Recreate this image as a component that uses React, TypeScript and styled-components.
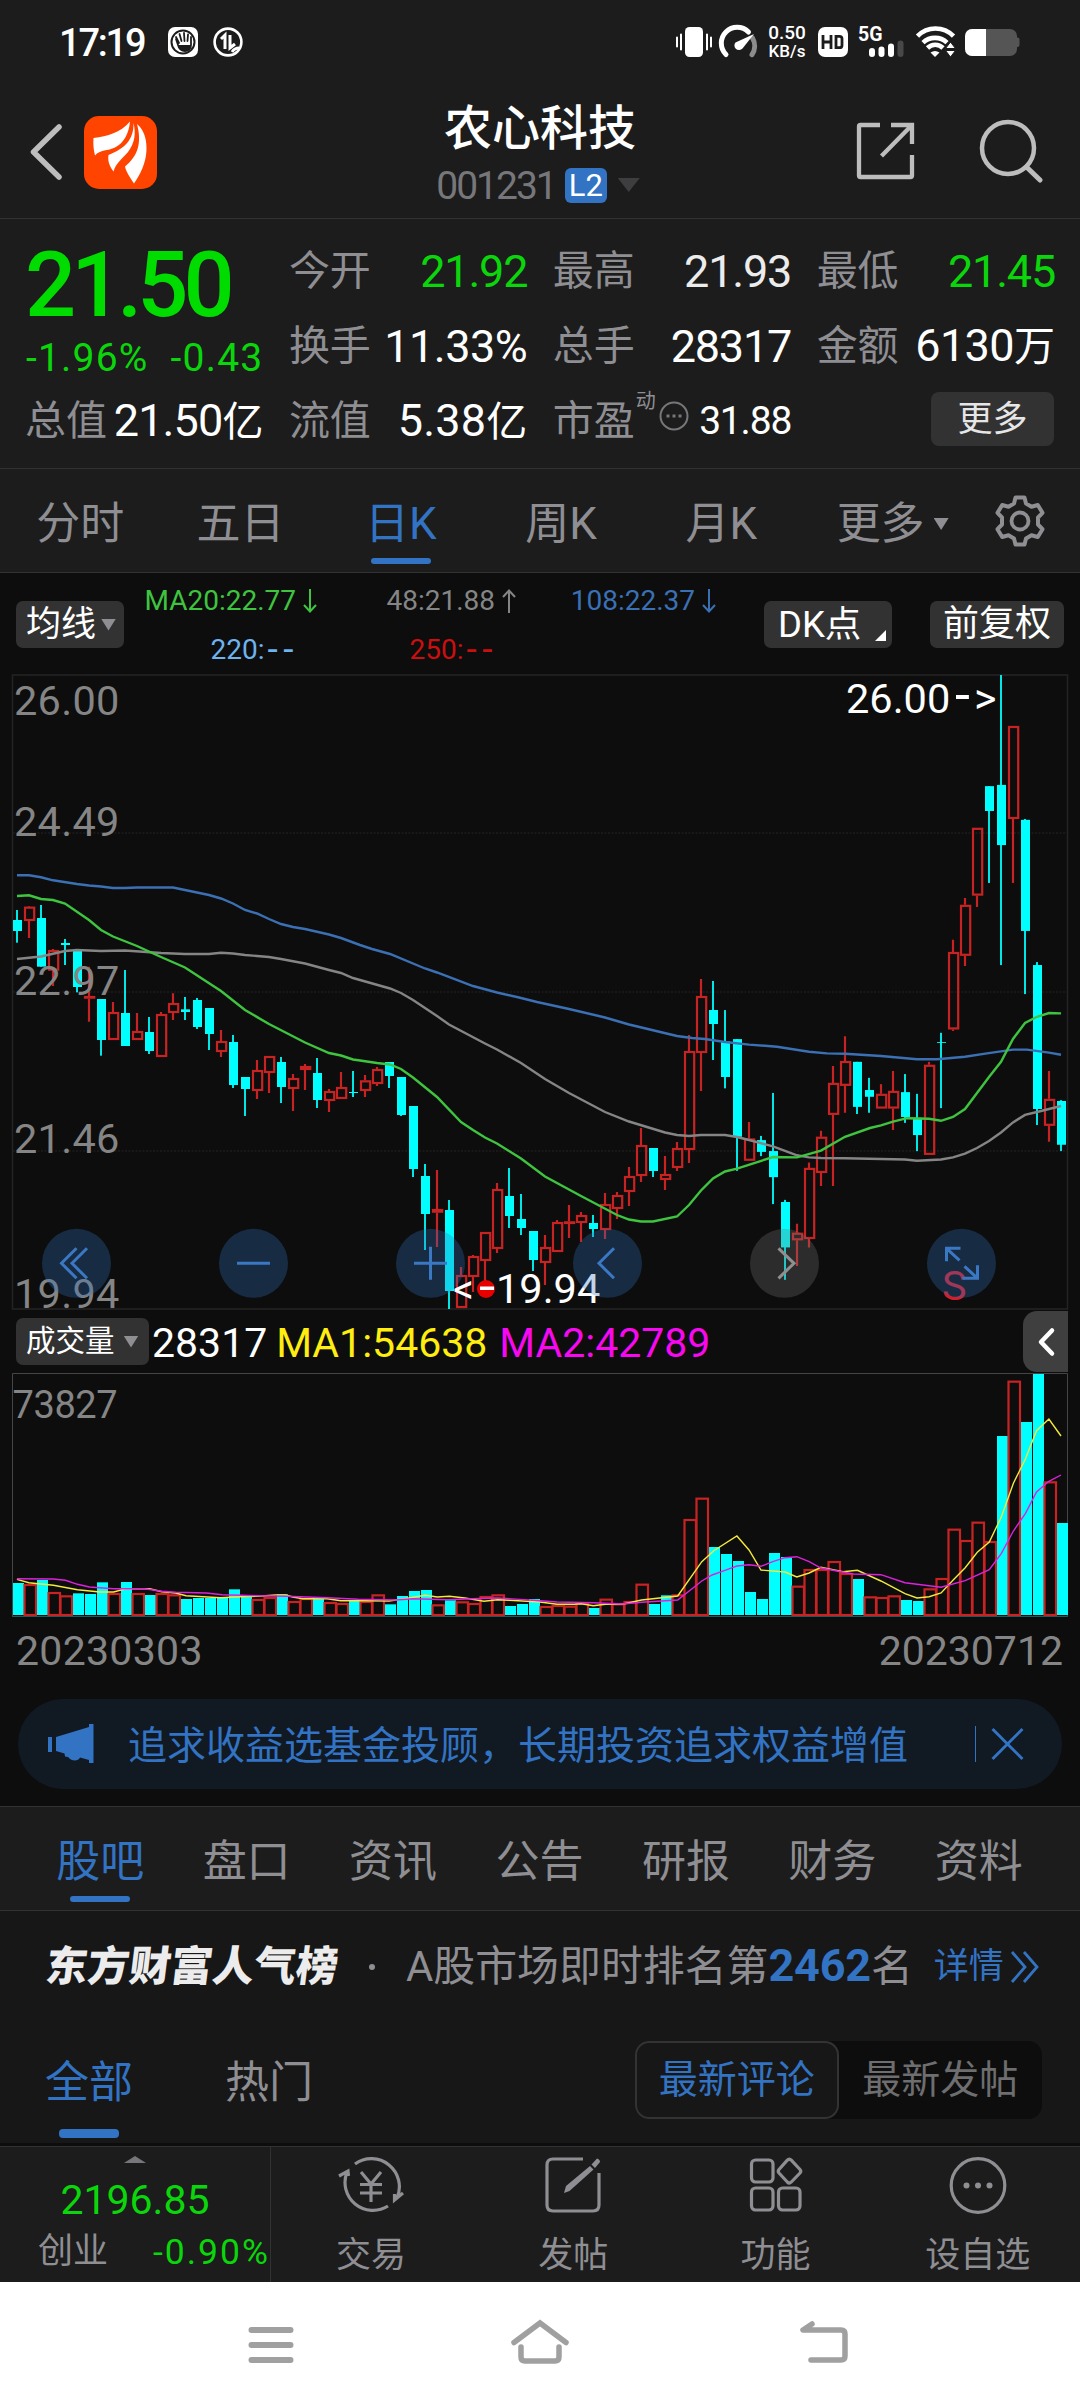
import React from "react";
import styled, { createGlobalStyle } from "styled-components";

const C = {
  panel: "#1c1c1c",
  chart: "#0d0d0d",
  feed: "#171717",
  line: "#323232",
  grey: "#8e8e93",
  white: "#ffffff",
  green: "#0bd60b",
  blue: "#3273c3",
  red: "#c82323",
  cyan: "#00ffff",
  button: "#323232",
};

const FONT = `Roboto, "Noto Sans CJK SC", sans-serif`;

const Global = createGlobalStyle`
  * { box-sizing: border-box; }
  body { margin: 0; background: ${C.panel}; }
`;

const Screen = styled.div`
  width: 1080px;
  height: 2408px;
  display: flex;
  flex-direction: column;
  overflow: hidden;
  background: ${C.panel};
  font-family: ${FONT};
  color: ${C.white};
  white-space: nowrap;
`;

const Text = styled.span<{ $size: number; $color?: string; $ls?: number; $w?: number; $lh?: number; $dy?: number; $ml?: number }>`
  display: block;
  font-size: ${(p) => p.$size}px;
  line-height: ${(p) => p.$lh ?? Math.round(p.$size * 1.2)}px;
  color: ${(p) => p.$color ?? C.white};
  letter-spacing: ${(p) => p.$ls ?? 0}px;
  font-weight: ${(p) => p.$w ?? 400};
  margin-left: ${(p) => p.$ml ?? 0}px;
  transform: translateY(${(p) => p.$dy ?? 0}px);
`;

/* ---------- status bar ---------- */

const StatusBar = styled.div`
  height: 84px;
  flex: none;
  display: flex;
  align-items: center;
  padding: 0 60px 0 59px;
`;

const StatusIcons = styled.div`
  display: flex;
  align-items: center;
  margin-left: auto;
`;

const StatusSvg = styled.svg<{ $ml?: number }>`
  display: block;
  flex: none;
  overflow: visible;
  margin-left: ${(p) => p.$ml ?? 0}px;
`;

const Speed = styled.div`
  width: 40px;
  margin-left: 10px;
  display: flex;
  flex-direction: column;
  align-items: center;
`;

const Signal = styled.div`
  position: relative;
  width: 46px;
  height: 30px;
  margin-left: 11px;
`;

const SignalLabel = styled.span`
  position: absolute;
  left: -1px;
  top: -4px;
  font-size: 19.500px;
  line-height: 23px;
  font-weight: 700;
`;

function Status() {
  return (
    <StatusBar>
      <Text $size={38} $w={500} $ls={-2.2} $dy={1}>17:19</Text>
      <StatusSvg $ml={24} width="30" height="30" viewBox="0 0 30 30">
        <rect width="30" height="30" rx="7" fill="#fff" />
        <circle cx="15" cy="15" r="11.5" fill="none" stroke="#1c1c1c" strokeWidth="2" />
        <path d="M8 12l2 6c1 4 4 6 7 6 4 0 6-3 6-6v-8M11 16l-3-6M13.5 14l-2-7M16.5 14l-.5-8M19.5 14l.5-6.500" fill="none" stroke="#1c1c1c" strokeWidth="1.8" strokeLinecap="round" />
        <path d="M10 18c1 4 4 6 7 6 4 0 6-3 6-6z" fill="#1c1c1c" />
      </StatusSvg>
      <StatusSvg $ml={15} width="30" height="30" viewBox="0 0 30 30">
        <circle cx="15" cy="15" r="13.4" fill="none" stroke="#fff" strokeWidth="2.6" />
        <path d="M8 12l4-4v14M17 8v13l5-4" fill="none" stroke="#fff" strokeWidth="3" />
        <path d="M19 25c2-3 4-4 7-4" fill="none" stroke="#fff" strokeWidth="3" />
      </StatusSvg>
      <StatusIcons>
        <StatusSvg width="36" height="30" viewBox="0 0 36 30">
          <rect x="9" width="18" height="30" rx="4.5" fill="#fff" />
          <path d="M1 10.500v9M5 7.500v15M31 7.500v15M35 10.500v9" stroke="#fff" strokeWidth="2" strokeLinecap="round" />
        </StatusSvg>
        <StatusSvg $ml={9} width="36" height="30" viewBox="0 0 36 30">
          <path d="M5 27.600A15.500 15.500 0 0 1 27.500 5" fill="none" stroke="#fff" strokeWidth="5" strokeLinecap="round" />
          <path d="M31.500 11a15.500 15.500 0 0 1-.5 16.600" fill="none" stroke="#8c8c8c" strokeWidth="5" strokeLinecap="round" />
          <path d="M14.500 15.500L33 7 21.500 21.500A4.600 4.600 0 1 1 14.500 15.500z" fill="#fff" />
        </StatusSvg>
        <Speed>
          <Text $size={19} $lh={16} $w={500} $dy={-1}>0.50</Text>
          <Text $size={17} $lh={16} $w={500} $dy={1}>KB/s</Text>
        </Speed>
        <StatusSvg $ml={11} width="30" height="30" viewBox="0 0 30 30">
          <rect width="30" height="30" rx="7" fill="#fff" />
          <path d="M5 8v14M13 8v14M5 15h8M18 9.300h3.500q2.500 0 2.500 2.500v6.400q0 2.500-2.500 2.500H18z" fill="none" stroke="#1c1c1c" strokeWidth="2.800" />
        </StatusSvg>
        <Signal>
          <SignalLabel>5G</SignalLabel>
          <StatusSvg width="46" height="30" viewBox="0 0 46 30">
            <path d="M13 24v3M22.500 22.500v4.500M32 19.500V27" stroke="#fff" strokeWidth="6" strokeLinecap="round" />
            <path d="M41.500 16.500V27" stroke="#484848" strokeWidth="6" strokeLinecap="round" />
          </StatusSvg>
        </Signal>
        <StatusSvg $ml={10} width="42" height="30" viewBox="0 0 42 30">
          <g fill="none" stroke="#fff" strokeWidth="4.600">
            <path d="M2.500 9.200a25 25 0 0 1 36 0" />
            <path d="M8 15.600a17.500 17.500 0 0 1 24 0" />
            <path d="M12.500 21a11 11 0 0 1 15.500 0" />
          </g>
          <path d="M15.500 25.500q4.500-3 9 0L20 30z" fill="#fff" />
          <path d="M30.500 21.500L35.500 15l5 6.500zM30.500 23.500h10L35.500 30z" fill="#fff" stroke="#1c1c1c" strokeWidth="1" />
        </StatusSvg>
        <StatusSvg $ml={8} width="55" height="28" viewBox="0 0 55 28">
          <rect x="0" y="1" width="52" height="27" rx="7" fill="#555" />
          <rect x="50" y="9.500" width="4.500" height="9.500" rx="2" fill="#555" />
          <path d="M21 1H7a7 7 0 0 0-7 7v13a7 7 0 0 0 7 7h14z" fill="#fff" />
        </StatusSvg>
      </StatusIcons>
    </StatusBar>
  );
}

/* ---------- header ---------- */

const HeaderBar = styled.header`
  height: 135px;
  flex: none;
  display: grid;
  grid-template-columns: 240px 1fr 240px;
  border-bottom: 1px solid ${C.line};
`;

const HeaderSide = styled.div<{ $right?: boolean }>`
  display: flex;
  align-items: center;
  padding: ${(p) => (p.$right ? "0 37px 0 0" : "2px 0 0 29px")};
  justify-content: ${(p) => (p.$right ? "flex-end" : "flex-start")};
  gap: ${(p) => (p.$right ? 63 : 21)}px;
`;

const HeaderTitle = styled.div`
  display: flex;
  flex-direction: column;
  align-items: center;
  padding-top: 17px;
`;

const CodeRow = styled.div`
  display: flex;
  align-items: center;
  gap: 11px;
  height: 36px;
  margin-top: 10px;
  padding-right: 4px;
`;

const Badge = styled.span`
  width: 42px;
  height: 35px;
  border-radius: 6px;
  background: ${C.blue};
  display: flex;
  align-items: center;
  justify-content: center;
  font-size: 31px;
  line-height: 35px;
  margin-left: -2px;
`;

const Caret = styled.i<{ $w: number; $h: number; $color: string; $up?: boolean }>`
  display: block;
  flex: none;
  width: ${(p) => p.$w}px;
  height: ${(p) => p.$h}px;
  background: ${(p) => p.$color};
  clip-path: ${(p) => (p.$up ? "polygon(50% 0, 100% 100%, 0 100%)" : "polygon(0 0, 100% 0, 50% 100%)")};
`;

const Svg = styled.svg`
  display: block;
  flex: none;
`;

function Header() {
  return (
    <HeaderBar>
      <HeaderSide>
        <Svg width="34" height="56" viewBox="0 0 34 56">
          <path d="M30 3L4.500 28 30 53" fill="none" stroke="#bdbdbd" strokeWidth="5.500" strokeLinecap="round" strokeLinejoin="round" />
        </Svg>
        <Svg width="73" height="73" viewBox="0 0 73 73">
          <rect width="73" height="73" rx="15" fill="#ff4400" />
          <path d="M46 5.500C36 17 24 20 9.500 22 9 28 9.500 34 11 39.500 16 33.500 24 35 31 31.500 40 27 45 17 46 5.500z" fill="#fff" />
          <path d="M49.500 7C50 24 40 33 24.500 39 23.500 45 25.500 50 29.500 55.500 32 47 38 43 44 36 51 27 52 17 49.500 7z" fill="#fff" />
          <path d="M53 8C58 27 54 40 41 50.500 42 56 46 61 50 67.500 60 53 62.500 42 62.500 32 62.500 21 59 13 53 8z" fill="#fff" />
        </Svg>
      </HeaderSide>
      <HeaderTitle>
        <Text $size={48} $lh={56} $w={500}>农心科技</Text>
        <CodeRow>
          <Text $size={39} $lh={36} $color="#77777b" $ls={-2} $dy={1}>001231</Text>
          <Badge>L2</Badge>
          <Caret $w={22} $h={14} $color="#3e3e40" />
        </CodeRow>
      </HeaderTitle>
      <HeaderSide $right>
        <Svg width="60" height="60" viewBox="0 0 60 60">
          <path d="M24 4H4.500Q3 4 3 5.500V54.500Q3 56 4.500 56H54.500Q56 56 56 54.500V34M35 4H56V23M56 4L25.500 35" fill="none" stroke="#bdbdbd" strokeWidth="4.300" />
        </Svg>
        <Svg width="64" height="64" viewBox="0 0 64 64">
          <circle cx="29" cy="29" r="26" fill="none" stroke="#bdbdbd" strokeWidth="4.500" />
          <path d="M47.500 48L61 61" stroke="#bdbdbd" strokeWidth="5" strokeLinecap="round" />
        </Svg>
      </HeaderSide>
    </HeaderBar>
  );
}

/* ---------- quote ---------- */

const QuoteGrid = styled.section`
  height: 250px;
  flex: none;
  display: grid;
  grid-template-columns: repeat(4, 1fr);
  grid-template-rows: repeat(3, 75px);
  column-gap: 26.500px;
  padding: 15px 26px 0 25px;
  border-bottom: 1px solid ${C.line};
`;

const PriceCell = styled.div`
  grid-row: span 2;
  display: flex;
  flex-direction: column;
  padding: 2px 0 0 0;
`;

const ChangeRow = styled.div`
  display: flex;
  justify-content: space-between;
  margin: 0 -1px 0 1px;
`;

const Stat = styled.div`
  display: flex;
  align-items: center;
  justify-content: space-between;
`;

const StatValue = styled.span<{ $color?: string; $size?: number; $ls?: number }>`
  font-size: ${(p) => p.$size ?? 45}px;
  line-height: 75px;
  letter-spacing: ${(p) => p.$ls ?? -1.2}px;
  margin-right: -1px;
  color: ${(p) => p.$color ?? C.white};
`;

const Unit = styled.span`
  font-size: 41px;
  letter-spacing: 0;
`;

const StatLabel = styled.span`
  display: flex;
  font-size: 41px;
  line-height: 75px;
  color: ${C.grey};
`;

const Sup = styled.sup`
  font-size: 20px;
  line-height: 20px;
  margin: 7px 2px 0 1px;
  color: ${C.grey};
`;

const MoreButton = styled.button`
  all: unset;
  box-sizing: border-box;
  width: 123px;
  height: 54px;
  margin-left: auto;
  margin-top: -6px;
  border-radius: 8px;
  background: ${C.button};
  color: #e6e6e6;
  font-size: 35px;
  line-height: 55px;
  text-align: center;
`;

function Quote() {
  return (
    <QuoteGrid>
      <PriceCell>
        <Text $size={90} $lh={100} $w={500} $ls={-5} $color="#00dc00">21.50</Text>
        <ChangeRow>
          <Text $size={39} $lh={44} $ls={1.2} $color={C.green}>-1.96%</Text>
          <Text $size={39} $lh={44} $ls={1.2} $color={C.green}>-0.43</Text>
        </ChangeRow>
      </PriceCell>
      <Stat><StatLabel>今开</StatLabel><StatValue $color={C.green}>21.92</StatValue></Stat>
      <Stat><StatLabel>最高</StatLabel><StatValue $color="#ececec">21.93</StatValue></Stat>
      <Stat><StatLabel>最低</StatLabel><StatValue $color={C.green}>21.45</StatValue></Stat>
      <Stat><StatLabel>换手</StatLabel><StatValue $ls={-0.5}>11.33%</StatValue></Stat>
      <Stat><StatLabel>总手</StatLabel><StatValue>28317</StatValue></Stat>
      <Stat><StatLabel>金额</StatLabel><StatValue $ls={-0.6}>6130<Unit>万</Unit></StatValue></Stat>
      <Stat><StatLabel>总值</StatLabel><StatValue $ls={-0.9}>21.50<Unit>亿</Unit></StatValue></Stat>
      <Stat><StatLabel>流值</StatLabel><StatValue $ls={0.2}>5.38<Unit>亿</Unit></StatValue></Stat>
      <Stat>
        <StatLabel>
          市盈<Sup>动</Sup>
          <Svg width="32" height="64" viewBox="0 0 32 64">
            <circle cx="16" cy="32" r="13.500" fill="none" stroke="#77777b" strokeWidth="2" />
            <path d="M8.500 32h3M14.500 32h3M20.500 32h3" stroke="#77777b" strokeWidth="3" />
          </Svg>
        </StatLabel>
        <StatValue $size={39}>31.88</StatValue>
      </Stat>
      <Stat><MoreButton>更多</MoreButton></Stat>
    </QuoteGrid>
  );
}

/* ---------- period tabs ---------- */

const PeriodBar = styled.nav`
  height: 104px;
  flex: none;
  display: grid;
  grid-template-columns: repeat(6, 160.300px) 1fr;
  border-bottom: 1px solid ${C.line};
`;

const Tab = styled.div<{ $active?: boolean }>`
  display: flex;
  flex-direction: column;
  align-items: center;
  justify-content: space-between;
  padding: 27px 0 8px;
  font-size: 44px;
  line-height: 56px;
  color: ${(p) => (p.$active ? C.blue : C.grey)};
`;

const Underline = styled.i<{ $h?: number }>`
  width: 60px;
  height: ${(p) => p.$h ?? 6}px;
  border-radius: 4px;
  background: ${C.blue};
`;

const TabCaret = styled.span`
  display: flex;
  align-items: center;
  gap: 9px;
  margin-right: -22px;
`;

const GearCell = styled.div`
  display: flex;
  align-items: center;
  justify-content: center;
  padding-right: 2px;
`;

function Periods() {
  return (
    <PeriodBar>
      <Tab>分时</Tab>
      <Tab>五日</Tab>
      <Tab $active>日K<Underline /></Tab>
      <Tab>周K</Tab>
      <Tab>月K</Tab>
      <Tab><TabCaret>更多<Caret $w={15} $h={12} $color={C.grey} /></TabCaret></Tab>
      <GearCell>
        <Svg width="54" height="54" viewBox="0 0 54 54">
          <path d="M22.500 3.500h9l1.500 6 5.500 3.200 6.300-1.700 4.700 7.800-4.500 4.700v7l4.500 4.700-4.700 7.800-6.300-1.700-5.500 3.200-1.500 6h-9l-1.500-6-5.500-3.200-6.300 1.700-4.700-7.800 4.500-4.700v-7l-4.500-4.700 4.700-7.800 6.300 1.700 5.500-3.200z" fill="none" stroke={C.grey} strokeWidth="4" strokeLinejoin="round" />
          <circle cx="27" cy="27" r="8.500" fill="none" stroke={C.grey} strokeWidth="3.800" />
        </Svg>
      </GearCell>
    </PeriodBar>
  );
}

/* ---------- moving average legend ---------- */

const LegendBar = styled.div`
  height: 101px;
  flex: none;
  display: flex;
  padding: 0 15px 0 16px;
  background: ${C.chart};
`;

const Chip = styled.button<{ $w: number; $size?: number; $gap?: number }>`
  all: unset;
  box-sizing: border-box;
  position: relative;
  flex: none;
  display: flex;
  align-items: center;
  gap: ${(p) => p.$gap ?? 5}px;
  width: ${(p) => p.$w}px;
  height: 47px;
  padding-left: 10px;
  border-radius: 7px;
  background: ${C.button};
  color: #fff;
  font-size: ${(p) => p.$size ?? 35}px;
  line-height: 47px;
`;

const LegendChip = styled(Chip)<{ $ml?: number; $pl?: number }>`
  margin: 28px 0 0 ${(p) => p.$ml ?? 0}px;
  padding-left: ${(p) => p.$pl ?? 10}px;
`;

const Corner = styled.i`
  position: absolute;
  right: 6px;
  bottom: 7px;
  width: 11px;
  height: 11px;
  background: #fff;
  clip-path: polygon(100% 0, 100% 100%, 0 100%);
`;

const Legend = styled.div`
  display: grid;
  grid-template-columns: 195px 199px 200px;
  grid-template-rows: 49px 49px;
  padding-top: 3px;
`;

const LegendItem = styled.div<{ $color: string }>`
  display: flex;
  align-items: center;
  justify-content: flex-end;
  gap: 6px;
  font-size: 28px;
  line-height: 49px;
  padding-right: 1px;
  color: ${(p) => p.$color};
`;

const Dashes = styled.span`
  font-size: 37px;
  line-height: 49px;
  letter-spacing: 5.500px;
  margin: 0 -3px 0 -3px;
`;

const ArrowBox = styled.span`
  width: 16px;
  height: 26px;
`;

function Arrow({ up }: { up?: boolean }) {
  return (
    <Svg width="16" height="26" viewBox="0 0 16 26">
      <path d={up ? "M8 25V2M2 9L8 2.500 14 9" : "M8 1v23M2 17l6 6.500L14 17"} fill="none" stroke="currentColor" strokeWidth="2" />
    </Svg>
  );
}

function MaLegend() {
  return (
    <LegendBar>
      <LegendChip $w={108}>均线<Caret $w={15} $h={12} $color={C.grey} /></LegendChip>
      <Legend>
        <LegendItem $color="#3fc43f">MA20:22.77<Arrow /></LegendItem>
        <LegendItem $color="#858585">48:21.88<Arrow up /></LegendItem>
        <LegendItem $color="#3b70b4">108:22.37<Arrow /></LegendItem>
        <LegendItem $color="#6db3ee">220:<Dashes>--</Dashes><ArrowBox /></LegendItem>
        <LegendItem $color="#cb0f0f">250:<Dashes>--</Dashes><ArrowBox /></LegendItem>
      </Legend>
      <LegendChip $w={128} $size={36.5} $ml={46} $pl={14}>DK点<Corner /></LegendChip>
      <LegendChip $w={134} $size={36} $ml={38} $pl={13}>前复权</LegendChip>
    </LegendBar>
  );
}

/* ---------- price chart ---------- */

type Candle = [up: 0 | 1, high: number, top: number, bottom: number, low: number];

// Bars are 12px apart; each batch is stored in the units of its own scale.
const BATCHES: { origin: number; scale: number; rows: Candle[] }[] = [
  {
    origin: 850,
    scale: 3,
    rows: [
      [0, 180, 210, 243, 278], [1, 168, 170, 213, 264], [0, 165, 204, 350, 350], [1, 297, 300, 362, 408],
      [0, 267, 279, 285, 345], [0, 300, 300, 411, 427], [1, 350, 438, 446, 515], [0, 447, 447, 570, 617],
      [1, 456, 486, 570, 570], [0, 360, 489, 588, 588], [1, 489, 543, 570, 570], [0, 501, 546, 603, 612],
      [1, 486, 492, 621, 621], [1, 430, 459, 489, 510], [0, 441, 478, 486, 510], [0, 444, 450, 531, 537],
      [0, 474, 474, 552, 600], [1, 540, 573, 606, 621], [0, 555, 576, 705, 714], [0, 681, 681, 717, 798],
      [1, 630, 660, 723, 747], [1, 618, 618, 669, 729], [0, 621, 636, 711, 759], [1, 672, 684, 717, 783],
      [1, 642, 648, 660, 720], [0, 624, 669, 750, 774], [1, 717, 723, 753, 786], [1, 666, 711, 747, 747],
      [0, 663, 726, 729, 741],
    ],
  },
  {
    origin: 950,
    scale: 3,
    rows: [
      [1, 375, 391, 423, 441], [1, 351, 357, 402, 408], [0, 336, 336, 378, 414], [0, 381, 381, 495, 498],
      [0, 468, 468, 657, 681], [0, 642, 678, 792, 900], [1, 660, 777, 788, 891], [0, 750, 780, 1023, 1077],
      [1, 951, 975, 1074, 1074], [1, 915, 918, 981, 1026], [1, 846, 846, 933, 1000], [1, 699, 717, 897, 909],
      [0, 654, 738, 798, 834], [0, 732, 807, 834, 855], [0, 843, 843, 930, 963], [1, 855, 891, 939, 1005],
      [1, 810, 816, 906, 906], [1, 765, 814, 822, 864], [1, 786, 795, 819, 876], [0, 795, 819, 837, 861],
      [1, 729, 762, 840, 867], [1, 726, 735, 777, 807], [1, 651, 678, 726, 768], [1, 534, 585, 678, 696],
      [0, 594, 594, 663, 681], [1, 618, 672, 690, 720], [1, 576, 594, 654, 663], [1, 255, 303, 600, 639],
      [1, 87, 138, 309, 423], [0, 93, 180, 222, 330],
    ],
  },
  {
    origin: 670,
    scale: 2.376,
    rows: [
      [0, 808, 882, 967, 994], [0, 877, 877, 1109, 1190], [1, 1074, 1113, 1166, 1166], [0, 1107, 1117, 1145, 1155],
      [0, 1005, 1143, 1205, 1269], [0, 1259, 1264, 1372, 1449], [1, 1316, 1337, 1355, 1416], [1, 1170, 1183, 1352, 1372],
      [1, 1095, 1109, 1195, 1226], [1, 941, 981, 1057, 1226], [1, 870, 929, 988, 1052], [0, 931, 931, 1038, 1055],
      [0, 969, 998, 1014, 1052], [1, 984, 1007, 1042, 1042], [1, 953, 1000, 1042, 1093], [0, 960, 1003, 1062, 1076],
      [0, 1007, 1064, 1105, 1143], [1, 931, 938, 1152, 1152], [0, 862, 884, 886, 1041], [1, 641, 670, 854, 858],
      [1, 542, 558, 679, 703], [1, 375, 375, 536, 563], [0, 276, 276, 335, 506], [0, 12, 273, 416, 701],
      [1, 133, 133, 354, 506], [0, 354, 356, 620, 770], [0, 694, 701, 1043, 1081], [1, 953, 1019, 1083, 1121],
      [0, 1022, 1024, 1128, 1143],
    ],
  },
];

const CANDLES: Candle[] = BATCHES.flatMap((b) =>
  b.rows.map((r) => [r[0], ...r.slice(1).map((v) => b.origin + (v as number) / b.scale)] as Candle),
);

const BLUE_LINE =
  "17,875.3 29,875.3 41,877.3 53,880.3 77,884 89,885.5 101,886.5 113,888 125,888 137,887.5 173,887.5 185,890 209,895 221,898.5 233,903.5 245,910 257,913.5 269,919 281,924 293,927 305,929 329,934.5 341,938 360,945 372,949 390,954 425,968.5 437,972.5 473,986 497,992.5 519,997.5 537,1002 569,1009 605,1017.5 629,1024.5 677,1036 692,1038 705,1039 725,1042 749,1044.6 777,1046.7 809,1051.7 827,1053.4 845,1053.8 881,1056 917,1059.3 937,1059.3 965,1056.8 987,1053.4 1013,1049.6 1027,1049.6 1049,1052.6 1061,1054.7";
const GREEN_LINE =
  "17,896 29,895.3 41,899 53,900 65,903.5 89,920 101,930 113,936.5 137,946 161,957 185,967.5 221,991 245,1010 269,1024 305,1042.5 329,1053 341,1055.5 353,1059.5 360,1060.5 377,1063 390,1064.5 401,1069 413,1077.5 437,1097 461,1122 473,1130 485,1137.5 497,1143.5 521,1158.5 545,1176.5 581,1196 617,1215 629,1219.5 641,1221.5 653,1221.5 677,1216.5 689,1205 701,1190.5 713,1178.5 725,1171.5 737,1168.7 773,1157 797,1157.4 821,1150.6 845,1136.8 870,1128 881,1125.4 893,1121.6 907,1118.2 929,1118.7 941,1120.8 953,1117 965,1109 989,1077 1001,1061.8 1013,1039 1025,1023 1037,1016.8 1049,1013 1061,1013.4";
const GREY_LINE =
  "17,959 41,956.5 65,951 77,950 101,951 125,950.5 161,953 185,954 209,954 221,952.8 233,953.5 245,955 269,957 281,959 305,963.5 329,970 341,973 353,978 360,980 390,988.5 401,993 413,1000 437,1016 449,1024.5 485,1043.5 497,1049.5 521,1063 545,1079 569,1093 605,1112 629,1121.5 665,1132.5 677,1135 689,1136 701,1135 725,1135 737,1137 749,1140 773,1146.4 797,1155.3 809,1157.4 821,1158 845,1158.2 905,1159.5 917,1160.7 941,1159.5 953,1157.4 965,1153.6 977,1148 989,1141 1001,1132.5 1013,1122.4 1025,1114.9 1037,1112 1061,1106";

const ChartSvg = styled.svg`
  display: block;
  flex: none;
  overflow: visible;
  background: ${C.chart};
  font-family: ${FONT};
`;

function CandleMark({ c, i }: { c: Candle; i: number }) {
  const x = 17 + i * 12;
  const [up, high, top, bottom, low] = c;
  const h = bottom - top;
  if (up) {
    return (
      <g stroke={C.red} strokeWidth="2.200" fill="none">
        <path d={`M${x} ${high}V${top}M${x} ${bottom}V${low}`} />
        <rect x={x - 4} y={top + 1} width="9.200" height={Math.max(h - 2, 0.6)} fill={h < 4.5 ? C.red : "none"} />
      </g>
    );
  }
  return (
    <g fill={C.cyan}>
      <rect x={x - 1} y={high} width="2" height={low - high} opacity="0.9" />
      <rect x={x - 4} y={top} width="9" height={h} />
    </g>
  );
}

const CONTROLS: { cx: number; d: string; off?: boolean }[] = [
  { cx: 76.5, d: "M0 -15L-15 0 0 15M10.500 -15L-4.500 0 10.500 15" },
  { cx: 253.5, d: "M-16.500 0H16.500" },
  { cx: 430.5, d: "M-16.500 0H16.500M0 -16.500V16.500" },
  { cx: 607.5, d: "M6.500 -15L-8.500 0 6.500 15" },
  { cx: 784.5, d: "M-6 -15L9.500 0 -6 15", off: true },
  { cx: 961.5, d: "M-15 -2V-15H-1M-14.500 -14.500L-2 -3M16 2V15H1M15.500 14.500L3 3" },
];

function PriceChart() {
  return (
    <ChartSvg width="1080" height="636" viewBox="0 674 1080 636">
      <path d="M12.500 675H1067.500V1309H12.500Z" fill="none" stroke="#242424" strokeWidth="1.500" />
      <path d="M13 833H1067M13 992H1067M13 1151H1067" stroke="#1d1d1d" strokeWidth="1.500" strokeDasharray="2 1.500" />
      {CANDLES.map((c, i) => <CandleMark key={i} c={c} i={i} />)}
      <g fill="none" strokeWidth="2.400">
        <polyline points={GREY_LINE} stroke="#858585" />
        <polyline points={BLUE_LINE} stroke="#3b70b4" />
        <polyline points={GREEN_LINE} stroke="#3fc43f" />
      </g>
      <g fontSize="41.500" fill="#858585" letterSpacing="0.300">
        <text x="14" y="714.500">26.00</text>
        <text x="14" y="836">24.49</text>
        <text x="14" y="994.500">22.97</text>
        <text x="14" y="1153">21.46</text>
        <text x="14" y="1307.500">19.94</text>
      </g>
      <g fontSize="41.500" fill="#fff">
        <text x="846" y="713">26.00<tspan x="955" fontSize="54">-</tspan><tspan x="974" fontSize="43">&gt;</tspan></text>
        <circle cx="486" cy="1289" r="9" fill="#e60000" />
        <text x="453" y="1302.500">&lt;</text>
        <rect x="480" y="1286.500" width="14" height="3.500" />
        <text x="496" y="1302.500">19.94</text>
      </g>
      <text x="942" y="1299.500" fontSize="41.500" fill="#d0202c">S</text>
      {CONTROLS.map((b) => (
        <g key={b.cx} transform={`translate(${b.cx} 1263.300)`}>
          <circle r="34.500" fill={b.off ? "#747474" : "#3071bf"} fillOpacity="0.3" />
          <path d={b.d} fill="none" stroke={b.off ? "#8f8f8f" : "#3b78c4"} strokeWidth="3" />
        </g>
      ))}
    </ChartSvg>
  );
}

/* ---------- volume ---------- */

const VolumeBar = styled.div`
  height: 63px;
  flex: none;
  display: flex;
  align-items: center;
  padding: 0 12px 0 16px;
`;

const DrawerHandle = styled.div`
  margin-left: auto;
  width: 45px;
  height: 61px;
  border-radius: 14px 0 0 14px;
  background: #3f3f3f;
  display: flex;
  align-items: center;
  justify-content: center;
`;

const ChartArea = styled.section`
  flex: none;
  background: ${C.chart};
`;

const VOLUME_TOPS = [
  819, 822, 810, 846, 856, 850, 852, 817, 849, 816, 849, 855, 849, 853, 867, 864, 864, 864, 838, 861, 867, 861,
  853, 873, 864, 862, 876, 879, 873, 873, 853, 883, 858, 843, 840, 883, 871, 874, 879, 858, 853, 888, 882, 867,
  888, 885, 887, 877, 894, 866, 880, 873, 821, 882, 856, 853, 627, 563, 711, 732, 753, 846, 867, 729, 741, 827,
  777, 777, 753, 789, 807, 859, 861, 856, 870, 873, 835, 804, 656, 690, 635, 693, 378, 212, 336, 192, 514, 639,
];

// Indexes of the sessions drawn as hollow (rising) bars.
const VOLUME_UP = new Set([
  1, 3, 4, 8, 10, 12, 13, 20, 21, 23, 24, 26, 27, 29, 30, 35, 37, 38, 39, 40, 44, 45, 46, 47, 49, 50, 51, 52, 55, 56,
  57, 65, 66, 67, 68, 69, 71, 72, 73, 76, 77, 78, 79, 80, 81, 83, 86,
]);

const YELLOW_LEFT =
  "49,808 84,818 155,826 225,839 290,846 330,846 365,836 435,836 470,845 510,849 540,857 640,863 700,860 760,858 800,855 830,855 850,861 880,866 950,866 990,872 1060,872 1130,873 1170,867 1235,856 1270,861 1305,859 1350,864 1405,874 1445,869 1480,871 1568,876";
const MAGENTA_LEFT =
  "49,806 155,807 190,811 225,823 260,831 330,836 420,836 470,844 510,847 600,849 645,854 700,856 830,859 950,863 1040,868 1150,870 1200,866 1300,869 1370,866 1445,864 1568,872";
const YELLOW_RIGHT =
  "1618,883 1668,883 1688,881 1723,887 1758,883 1808,883 1863,870 1968,858 2038,755 2073,722 2140,678 2175,720 2210,780 2280,786 2314,801 2350,789 2384,772 2448,785 2490,781 2558,813 2628,851 2663,864 2698,860 2733,849 2768,810 2803,773 2838,727 2873,696 2908,620 2943,520 2978,446 3010,362 3046,327 3081,378";
const MAGENTA_RIGHT =
  "1618,876 1723,878 1808,882 1863,877 1968,870 2038,813 2068,795 2103,782 2140,768 2175,764 2210,769 2244,755 2280,743 2314,740 2350,755 2384,774 2478,792 2558,794 2628,818 2733,832 2803,812 2873,779 2908,730 2943,663 2978,610 3010,546 3046,514 3081,495";

const toPixels = (points: string) =>
  points
    .split(" ")
    .map((p) => p.split(",").map(Number))
    .map(([x, y]) => `${(x / 2.904).toFixed(1)},${(1310 + y / 3).toFixed(1)}`)
    .join(" ");

function VolumeChart() {
  return (
    <ChartSvg width="1080" height="245" viewBox="0 1373 1080 245">
      <path d="M12.500 1373.500H1067.500V1616.500H12.500Z" fill="none" stroke="#454545" strokeWidth="1" />
      {VOLUME_TOPS.map((v, i) => {
        const top = 1310 + v / 3;
        const x = 13 + i * 12;
        return VOLUME_UP.has(i) ? (
          <rect key={i} x={x - 0.5} y={top + 1} width="11.500" height={1614 - top} fill="none" stroke={C.red} strokeWidth="2.200" />
        ) : (
          <rect key={i} x={x} y={top} width="11" height={1615 - top} fill={C.cyan} />
        );
      })}
      <path d="M12.500 1616.500H1067.500" stroke="#2d5555" strokeWidth="1" />
      <g fill="none" strokeWidth="1.400">
        <polyline points={toPixels(`${YELLOW_LEFT} ${YELLOW_RIGHT}`)} stroke="#f2ea3c" />
        <polyline points={toPixels(`${MAGENTA_LEFT} ${MAGENTA_RIGHT}`)} stroke="#dd22dd" />
      </g>
      <text x="12.500" y="1417.500" fontSize="38" fill="#858585" letterSpacing="-0.400">73827</text>
    </ChartSvg>
  );
}

const DateRow = styled.div`
  height: 81px;
  flex: none;
  display: flex;
  justify-content: space-between;
  padding: 8px 17px 0 16px;
`;

/* ---------- banner ---------- */

const BannerWrap = styled.div`
  height: 107px;
  flex: none;
  padding: 0 18px;
  background: ${C.chart};
`;

const Banner = styled.div`
  height: 90px;
  border-radius: 45px;
  background: #111922;
  display: flex;
  align-items: center;
  padding: 0 38px 0 30px;
`;

const BannerText = styled.span`
  margin-left: 34px;
  padding-top: 3px;
  font-size: 39px;
  line-height: 50px;
  color: ${C.blue};
`;

const BannerDivider = styled.i`
  width: 1px;
  height: 36px;
  margin: 0 15px 0 auto;
  background: ${C.blue};
`;

function Notice() {
  return (
    <BannerWrap>
      <Banner>
        <Svg width="46" height="42" viewBox="0 0 46 42" fill={C.blue}>
          <path d="M0 14h4v15H0zM8 14L41 4V1h4.500v39H41v-3l-9-2.500c-1.500 3.500-8 4.500-12-.5l-3-.5-.5-3L8 28z" />
        </Svg>
        <BannerText>追求收益选基金投顾，长期投资追求权益增值</BannerText>
        <BannerDivider />
        <Svg width="33" height="34" viewBox="0 0 33 34">
          <path d="M1.500 2L31.500 32M31.500 2L1.500 32" stroke={C.blue} strokeWidth="3" />
        </Svg>
      </Banner>
    </BannerWrap>
  );
}

/* ---------- content tabs ---------- */

const ContentTabs = styled.nav`
  height: 105px;
  flex: none;
  display: grid;
  grid-template-columns: repeat(7, 1fr);
  padding: 0 28px 0 27px;
  border-top: 1px solid ${C.line};
  border-bottom: 1px solid ${C.line};
`;

const Feed = styled.section`
  height: 235px;
  flex: none;
  background: ${C.feed};
  border-bottom: 3px solid #0d0d0d;
`;

const RankRow = styled.div`
  height: 112px;
  display: flex;
  align-items: center;
  padding-left: 46px;
`;

const RankTitle = styled.span`
  width: 293px;
  font-size: 41.700px;
  line-height: 50px;
  font-weight: 900;
  transform: skewX(-7deg);
  color: #ececec;
`;

const Dot = styled.i`
  width: 6px;
  height: 6px;
  margin: 0 31px 0 30px;
  border-radius: 50%;
  background: ${C.grey};
`;

const RankText = styled.span`
  font-size: 41.900px;
  line-height: 50px;
  color: ${C.grey};
`;

const RankNumber = styled.b`
  font-size: 45px;
  font-weight: 700;
  line-height: 40px;
  letter-spacing: -0.200px;
  color: ${C.blue};
`;

const FilterRow = styled.div`
  height: 120px;
  display: flex;
  padding: 0 38px 0 45px;
`;

const FilterTab = styled(Tab)`
  width: 88px;
  margin-right: 92px;
  padding: 32px 0 5px;
`;

const Segmented = styled.div`
  display: flex;
  width: 407px;
  height: 78px;
  margin: 18px 0 0 auto;
  border-radius: 14px;
  background: #0d0d0d;
`;

const Segment = styled.div<{ $active?: boolean }>`
  flex: 1;
  display: flex;
  align-items: center;
  justify-content: center;
  font-size: 39px;
  line-height: 50px;
  border-radius: 14px;
  border: 2px solid ${(p) => (p.$active ? "#333333" : "transparent")};
  background: ${(p) => (p.$active ? C.feed : "transparent")};
  color: ${(p) => (p.$active ? C.blue : "#6e6e70")};
`;

/* ---------- bottom bar ---------- */

const BottomBar = styled.footer`
  height: 136px;
  flex: none;
  display: grid;
  grid-template-columns: 271px repeat(4, 1fr);
  border-top: 1px solid ${C.line};
`;

const IndexCell = styled.div`
  display: flex;
  flex-direction: column;
  align-items: center;
  padding-top: 9px;
  border-right: 1px solid ${C.line};
`;

const IndexRow = styled.div`
  align-self: stretch;
  display: flex;
  align-items: center;
  justify-content: space-between;
  padding: 0 0 0 38px;
`;

const Action = styled.div`
  display: flex;
  flex-direction: column;
  align-items: center;
  gap: 19px;
  padding: 8px 2px 0 0;
  font-size: 35px;
  line-height: 44px;
  color: ${C.grey};
`;

const SystemNav = styled.div`
  flex: 1;
  display: grid;
  grid-template-columns: 271px 268px 300px;
  padding: 37px 0 0 135px;
  background: #fff;
`;

const NavCell = styled.div`
  display: flex;
  justify-content: center;
`;

const stroke = { fill: "none", stroke: C.grey, strokeWidth: 3.2 } as const;

function Bottom() {
  return (
    <BottomBar>
      <IndexCell>
        <Caret $w={22} $h={7} $color="#77777b" $up />
        <Text $size={41} $lh={50} $color={C.green} $dy={12}>2196.85</Text>
        <IndexRow>
          <Text $size={35} $lh={56} $color={C.grey} $dy={11}>创业</Text>
          <Text $size={35.5} $lh={56} $ls={2} $color={C.green} $dy={11}>-0.90%</Text>
        </IndexRow>
      </IndexCell>
      <Action>
        <Svg width="66" height="60" viewBox="0 0 66 60">
          <path d="M17 9A28 28 0 0 1 59 43M50 51A28 28 0 0 1 9 17M1 21L10 16 10.500 21M65 38L56.500 45V39M23 17L33 29 43 17M33 29V47M22 29.500H44M22 38H44" {...stroke} />
        </Svg>
        交易
      </Action>
      <Action>
        <Svg width="60" height="60" viewBox="0 0 60 60">
          <path d="M40 4H10Q4 4 4 10V50Q4 56 10 56H50Q56 56 56 50V18" {...stroke} />
          <path d="M21 38L23 31 47 11 50.500 14.500 26.500 36zM48.500 9.500L54 3.500Q57 4.500 57 7L52 13z" fill={C.grey} />
        </Svg>
        发帖
      </Action>
      <Action>
        <Svg width="56" height="60" viewBox="0 0 56 60">
          <rect x="3.500" y="5" width="21.500" height="22" rx="4" {...stroke} />
          <rect x="3.500" y="33" width="21.500" height="22" rx="4" {...stroke} />
          <rect x="30.500" y="33" width="21.500" height="22" rx="4" {...stroke} />
          <path d="M39.300 5.200Q41.300 3.200 43.300 5.200L52 14.500Q53.500 16.200 52 18L43.300 27Q41.300 29 39.300 27L31 18Q29.500 16.200 31 14.500Z" {...stroke} />
        </Svg>
        功能
      </Action>
      <Action>
        <Svg width="60" height="60" viewBox="0 0 60 60">
          <circle cx="30" cy="30.500" r="26.800" {...stroke} />
          <g fill={C.grey}><circle cx="18.500" cy="30.500" r="3" /><circle cx="30" cy="30.500" r="3" /><circle cx="41.500" cy="30.500" r="3" /></g>
        </Svg>
        设自选
      </Action>
    </BottomBar>
  );
}

export default function App() {
  return (
    <Screen>
      <Global />
      <Status />
      <Header />
      <Quote />
      <Periods />
      <MaLegend />
      <ChartArea>
        <PriceChart />
        <VolumeBar>
          <Chip $w={133} $size={29.5} $gap={9}>成交量<Caret $w={15} $h={12} $color={C.grey} /></Chip>
          <Text $size={41} $ml={3} $dy={2}>28317</Text>
          <Text $size={41} $ml={9} $dy={2} $color="#ffee10">MA1:54638</Text>
          <Text $size={41} $ml={12} $dy={2} $color="#f808f0">MA2:42789</Text>
          <DrawerHandle>
            <Svg width="20" height="30" viewBox="0 0 20 30">
              <path d="M16 3.500L5 15 16 26.500" fill="none" stroke="#fff" strokeWidth="4.500" strokeLinecap="round" strokeLinejoin="round" />
            </Svg>
          </DrawerHandle>
        </VolumeBar>
        <VolumeChart />
        <DateRow>
          <Text $size={41} $lh={50} $ls={0.3} $color="#858585">20230303</Text>
          <Text $size={41} $lh={50} $color="#858585">20230712</Text>
        </DateRow>
      </ChartArea>
      <Notice />
      <ContentTabs>
        <Tab $active>股吧<Underline /></Tab>
        {["盘口", "资讯", "公告", "研报", "财务", "资料"].map((t) => <Tab key={t}>{t}</Tab>)}
      </ContentTabs>
      <Feed>
        <RankRow>
          <RankTitle>东方财富人气榜</RankTitle>
          <Dot />
          <RankText>A股市场即时排名第<RankNumber>2462</RankNumber>名</RankText>
          <Text $size={35} $color={C.blue} $ml={21}>详情</Text>
          <Svg width="38" height="34" viewBox="0 0 38 34">
            <path d="M8 2L21 17 8 32M20 2L33 17 20 32" fill="none" stroke={C.blue} strokeWidth="2.800" />
          </Svg>
        </RankRow>
        <FilterRow>
          <FilterTab $active>全部<Underline $h={9} /></FilterTab>
          <FilterTab>热门</FilterTab>
          <Segmented>
            <Segment $active>最新评论</Segment>
            <Segment>最新发帖</Segment>
          </Segmented>
        </FilterRow>
      </Feed>
      <Bottom />
      <SystemNav>
        <NavCell>
          <Svg width="46" height="46" viewBox="0 0 46 46">
            <path d="M3.500 11H42.500M3.500 26H42.500M3.500 41H42.500" stroke="#a0a0a0" strokeWidth="6" strokeLinecap="round" />
          </Svg>
        </NavCell>
        <NavCell>
          <Svg width="60" height="46" viewBox="0 0 60 46">
            <path d="M4 23.500L30 4 56 23.500M11 28V38Q11 42 15 42H45Q49 42 49 38V28" fill="none" stroke="#a0a0a0" strokeWidth="5.500" strokeLinecap="round" />
          </Svg>
        </NavCell>
        <NavCell>
          <Svg width="50" height="46" viewBox="0 0 50 46">
            <path d="M13 5L4 11H42Q46 11 46 15V37Q46 41 42 41H12" fill="none" stroke="#a0a0a0" strokeWidth="5.500" strokeLinecap="round" strokeLinejoin="round" />
          </Svg>
        </NavCell>
      </SystemNav>
    </Screen>
  );
}
